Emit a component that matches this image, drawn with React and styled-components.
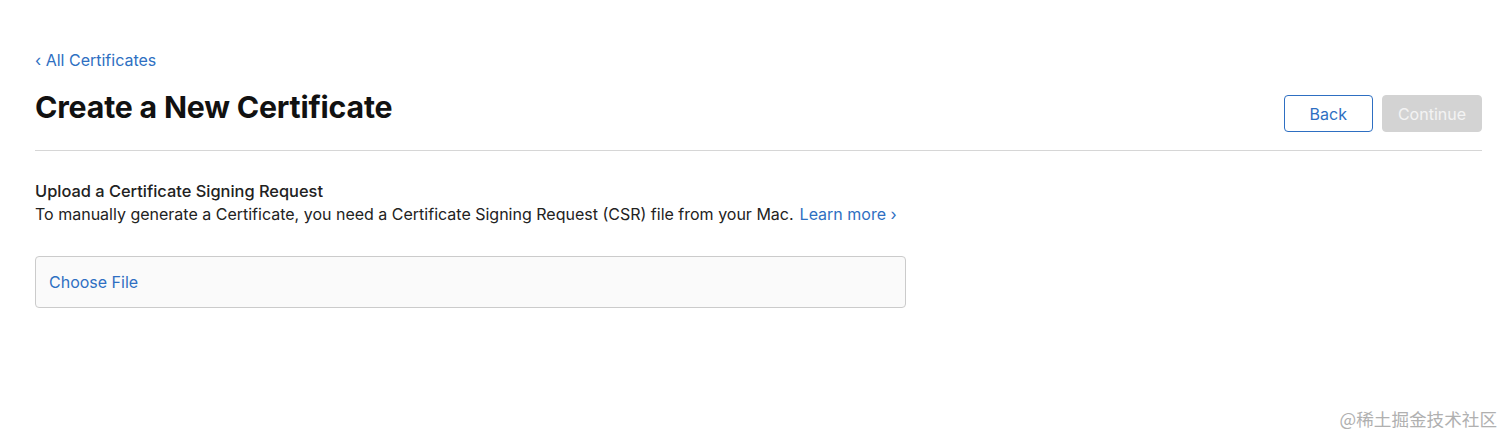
import React from "react";
import styled, { createGlobalStyle } from "styled-components";

const Global = createGlobalStyle`
  html, body { margin: 0; padding: 0; background: #fff; }
  body { font-family: Inter, "Noto Sans", "Liberation Sans", sans-serif; color: #1d1d1f; }
  * { box-sizing: border-box; }
`;

const Page = styled.div`
  position: relative;
  width: 1512px;
  height: 445px;
  padding: 50px 30px 0 35px;
`;

const BackLink = styled.a`
  display: inline-flex;
  align-items: center;
  gap: 5px;
  font-size: 16px;
  color: #2e6fc2;
  text-decoration: none;
  line-height: 20px;
`;

const Header = styled.div`
  display: flex;
  align-items: flex-end;
  justify-content: space-between;
  margin-top: 19px;
  padding-bottom: 18px;
  border-bottom: 1px solid #d6d6d6;
`;

const Title = styled.h1`
  margin: 0 0 6px;
  font-size: 30.3px;
  font-weight: 700;
  letter-spacing: -0.2px;
  color: #111;
  line-height: 37px;
`;

const Actions = styled.div`
  display: flex;
  gap: 9px;
`;

const Button = styled.button`
  height: 37px;
  padding: 0 ${(p) => p.$pad}px;
  font-family: inherit;
  font-size: 16px;
  border-radius: 4px;
  border: 1px solid ${(p) => (p.$disabled ? "#d3d3d3" : "#2e6fc2")};
  background: ${(p) => (p.$disabled ? "#d3d3d3" : "#fff")};
  color: ${(p) => (p.$disabled ? "#f3f3f3" : "#2e6fc2")};
`;

const Section = styled.div`
  margin-top: 29px;
`;

const SectionTitle = styled.div`
  font-size: 16.4px;
  font-weight: 500;
  line-height: 22px;
  color: #222;
`;

const Desc = styled.div`
  font-size: 16px;
  line-height: 24px;
  color: #222;
`;

const InlineLink = styled.a`
  color: #2e6fc2;
  text-decoration: none;
  margin-left: 6px;
`;

const FileBox = styled.div`
  margin-top: 30px;
  width: 871px;
  height: 52px;
  display: flex;
  align-items: center;
  padding-left: 13px;
  background: #fafafa;
  border: 1px solid #cbcbcb;
  border-radius: 4px;
  font-size: 16px;
  color: #2e6fc2;
`;

const Watermark = styled.div`
  position: absolute;
  right: 15px;
  bottom: 14px;
  font-size: 17.6px;
  color: #b0b0b0;
  font-family: "Noto Sans CJK SC", sans-serif;
`;

export default function App() {
  return (
    <Page>
      <Global />
      <BackLink href="#">‹ All Certificates</BackLink>
      <Header>
        <Title>Create a New Certificate</Title>
        <Actions>
          <Button $pad={25}>Back</Button>
          <Button $pad={15} $disabled>Continue</Button>
        </Actions>
      </Header>
      <Section>
        <SectionTitle>Upload a Certificate Signing Request</SectionTitle>
        <Desc>
          To manually generate a Certificate, you need a Certificate Signing Request (CSR) file from your Mac.
          <InlineLink href="#">Learn more ›</InlineLink>
        </Desc>
        <FileBox>Choose File</FileBox>
      </Section>
      <Watermark>@稀土掘金技术社区</Watermark>
    </Page>
  );
}
